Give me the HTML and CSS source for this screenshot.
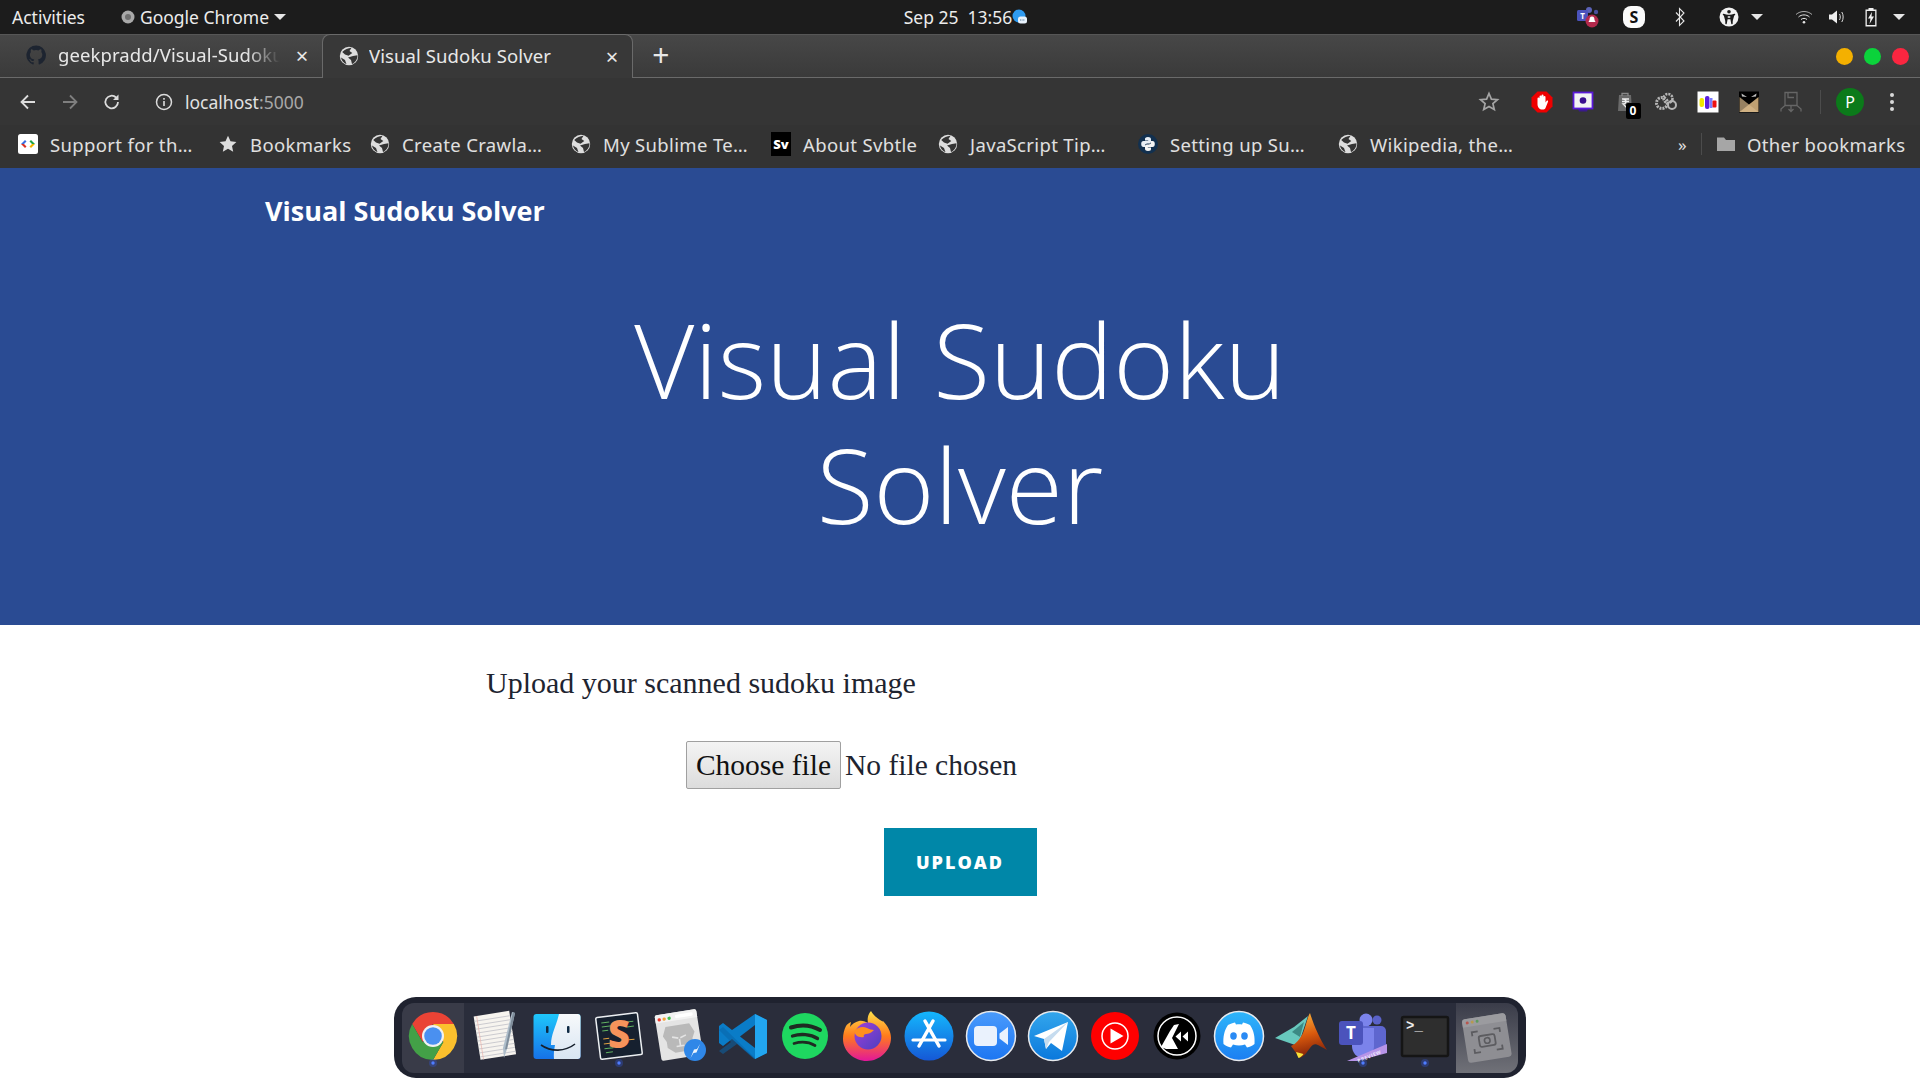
FILE: index.html
```html
<!DOCTYPE html>
<html lang="en">
<head>
<meta charset="utf-8">
<title>Visual Sudoku Solver</title>
<link rel="stylesheet" href="styles.css">
</head>
<body>
<svg class="defs" aria-hidden="true">
  <symbol id="globe" viewBox="0 0 20 20">
    <circle cx="10" cy="10" r="9.200" fill="#dedede"/>
    <path d="M3.200 6C6 3 9 2 12.500 1.700L10.500 5l2.800 2-3.800 2.800L6 8.500z M9 11.500l5-1.500 4.500-.8C18.500 13 16.500 16.500 13 18l-1-4z M2 11.500l4 2.500 1.500 4.300C4.500 17 2.500 14.500 2 11.500z" fill="#353535"/>
  </symbol>
</svg>

<header class="topbar">
  <div class="top-left">
    <span class="top-activities">Activities</span>
    <span class="top-app">
      <svg class="i14" viewBox="0 0 14 14"><circle cx="7" cy="7" r="6.500" fill="#a9a9a9"/><circle cx="7" cy="7" r="3" fill="#6f6f6f"/></svg>
      Google Chrome
      <i class="caret"></i>
    </span>
  </div>
  <div class="top-clock">
    <span>Sep 25&nbsp; 13:56</span>
    <svg class="clock-bubble" viewBox="0 0 16 16"><circle cx="7" cy="7" r="6.500" fill="#2f9bf0"/><rect x="6" y="7.500" width="9" height="7" rx="2.500" fill="#e8f2fb"/><path d="M8 11h5" stroke="#5b7d9b" stroke-width="1" stroke-dasharray="1 .6"/></svg>
  </div>
  <div class="top-right">
    <svg class="tray tray-teams" viewBox="0 0 24 22"><circle cx="13" cy="4" r="3" fill="#5b62b8"/><circle cx="20" cy="6" r="2.200" fill="#4a4f9c"/><rect x="1" y="4" width="11" height="11" rx="1.500" fill="#4b53bc"/><text x="6.500" y="13" class="tray-t">T</text><circle cx="16" cy="15" r="6.500" fill="#b3294c"/><path d="M16 10.500c-2 0-2.500 1.800-2.500 3.500l-1 2h7l-1-2c0-1.700-.5-3.500-2.500-3.500z" fill="#fff"/></svg>
    <span class="tray-skype">S</span>
    <svg class="tray tray-bt" viewBox="0 0 12 20"><path d="M2 5.500 10 14l-4.500 4.500V1.500L10 6 2 14.500" fill="none" stroke="#e6e6e6" stroke-width="1.100"/></svg>
    <svg class="tray tray-acc" viewBox="0 0 20 20"><circle cx="10" cy="10" r="9.500" fill="#f2f2f2"/><circle cx="10" cy="4.800" r="1.800" fill="#1c1c1c"/><path d="M4.500 7.500 8 8.500v3L7 16.500M15.500 7.500 12 8.500v3l1 5M8 8.500h4M8.500 11.500h3" fill="#1c1c1c" stroke="#1c1c1c" stroke-width="1.500" stroke-linecap="round"/></svg>
    <i class="caret caret-acc"></i>
    <svg class="tray tray-wifi" viewBox="0 0 18 16"><g fill="none" stroke="#e6e6e6" stroke-width="1"><path d="M1 5.500c4.500-4 11.500-4 16 0" opacity=".7"/><path d="M3.500 8c3-2.800 8-2.800 11 0"/><path d="M6 10.500c1.800-1.500 4.200-1.500 6 0"/></g><circle cx="9" cy="13.300" r="1.300" fill="#e6e6e6"/></svg>
    <svg class="tray tray-vol" viewBox="0 0 17 16"><path d="M1 5.500h3L9 1.500v13l-5-4H1z" fill="#eee"/><path d="M11.500 5c1 1.800 1 4.200 0 6M13.800 3c1.800 3 1.800 7 0 10" fill="none" stroke="#ddd" stroke-width="1"/></svg>
    <svg class="tray tray-bat" viewBox="0 0 14 20"><path d="M4.500 1h5v1.500h3v17h-11v-17h3z" fill="#f0f0f0"/><rect x="2.800" y="4" width="8.400" height="14" fill="#1c1c1c"/><path d="M8 5 4 11.500h2.500L5.500 17 10 9.500H7.500z" fill="#f0f0f0"/></svg>
    <i class="caret caret-end"></i>
  </div>
</header>

<div class="tabstrip">
  <div class="tab tab-idle">
    <svg class="fav" viewBox="0 0 20 20"><path d="M10 .5a9.700 9.700 0 0 0-3 18.900c.5.100.7-.2.700-.5v-1.700c-2.700.6-3.300-1.300-3.300-1.300-.4-1.100-1.100-1.400-1.100-1.400-.9-.6.100-.6.100-.6 1 .1 1.500 1 1.500 1 .9 1.500 2.300 1.100 2.800.8.100-.6.300-1.100.6-1.300-2.200-.2-4.400-1.100-4.400-4.800 0-1.100.4-1.900 1-2.600-.1-.2-.4-1.200.1-2.600 0 0 .8-.3 2.700 1a9.400 9.400 0 0 1 4.800 0c1.900-1.300 2.700-1 2.700-1 .5 1.400.2 2.400.1 2.600.6.700 1 1.500 1 2.600 0 3.700-2.200 4.500-4.400 4.800.4.300.7.900.7 1.800v2.700c0 .3.200.6.700.5A9.700 9.700 0 0 0 10 .5z" fill="#1d2430"/></svg>
    <span class="tab-title tab-fade">geekpradd/Visual-Sudoku</span>
    <span class="tab-x">×</span>
  </div>
  <div class="tab tab-active">
    <svg class="fav"><use href="#globe"/></svg>
    <span class="tab-title tab-title-on">Visual Sudoku Solver</span>
    <span class="tab-x">×</span>
  </div>
  <span class="tab-new">+</span>
  <div class="winbtns">
    <i class="winbtn win-min"></i><i class="winbtn win-max"></i><i class="winbtn win-close"></i>
  </div>
</div>

<div class="toolbar">
  <svg class="nav-ic" viewBox="0 0 20 20"><path d="M17 10H4M10 3.500 3.500 10l6.500 6.500" fill="none" stroke="#dcdcdc" stroke-width="1.800"/></svg>
  <svg class="nav-ic" viewBox="0 0 20 20"><path d="M3 10h13M10 3.500l6.500 6.500-6.500 6.500" fill="none" stroke="#7f7f7f" stroke-width="1.800"/></svg>
  <svg class="nav-ic" viewBox="0 0 20 20"><path d="M16 10a6.300 6.300 0 1 1-1.900-4.500" fill="none" stroke="#dcdcdc" stroke-width="1.800"/><path d="M16.500 2.500v5.500H11z" fill="#dcdcdc"/></svg>
  <div class="omni">
    <svg class="omni-info" viewBox="0 0 18 18"><circle cx="9" cy="9" r="7.500" fill="none" stroke="#dcdcdc" stroke-width="1.500"/><rect x="8.200" y="8" width="1.600" height="5" fill="#dcdcdc"/><rect x="8.200" y="5" width="1.600" height="1.700" fill="#dcdcdc"/></svg>
    <span class="omni-host">localhost</span><span class="omni-port">:5000</span>
  </div>
  <div class="ext-row">
    <svg class="ext ext-star" viewBox="0 0 24 24"><path d="m12 3.500 2.400 5.600 6.100.5-4.600 4 1.400 6-5.300-3.200-5.300 3.200 1.400-6-4.600-4 6.100-.5z" fill="none" stroke="#a5a5a5" stroke-width="1.700"/></svg>
    <svg class="ext" viewBox="0 0 24 24"><path d="M7.500 1.500h9l6 6v9l-6 6h-9l-6-6v-9z" fill="#ee0000"/><path d="M7.500 14V8.500a1 1 0 0 1 2 0V11V6.500a1 1 0 0 1 2 0V11V5.500a1 1 0 0 1 2 0V11V7a1 1 0 0 1 2 0v5.500l1-1.500c.6-.9 2-.3 1.500.8L15.500 18c-.5 1-1.500 1.500-3 1.500-3 0-5-2-5-5.500z" fill="#fff"/></svg>
    <svg class="ext" viewBox="0 0 24 24"><path d="M7 19h10l-1 2.500H8z" fill="#3a1a8c"/><rect x="2.500" y="2.500" width="19" height="16" fill="#f3f3f3" stroke="#5a19d8" stroke-width="1.800"/><circle cx="12" cy="10.500" r="3.300" fill="#3a0f8f"/></svg>
    <div class="ext ext-cart">
      <svg class="ext-fill" viewBox="0 0 24 24"><path d="M6 5h12l1 16H5z" fill="#6a6a6a"/><path d="M9 6V3.500h6V6" fill="none" stroke="#888" stroke-width="1.300"/><path d="M9 9h7M9 11.500h7M10 9c4 0 4 5 0 5l5 5" fill="none" stroke="#eee" stroke-width="1.300"/></svg>
      <span class="ext-badge">0</span>
    </div>
    <svg class="ext" viewBox="0 0 24 24"><g fill="none" stroke="#b5b5b5"><circle cx="8" cy="13" r="5.500" stroke-width="3" stroke-dasharray="2 1"/><circle cx="14" cy="8.500" r="4.500" stroke-width="2.500" stroke-dasharray="2 1"/><circle cx="18" cy="15" r="4" stroke-width="2"/></g></svg>
    <svg class="ext" viewBox="0 0 24 24"><rect x="1.500" y="1.500" width="21" height="21" fill="#fff"/><rect x="3.500" y="8" width="4.500" height="9" rx="2" fill="#efe600"/><rect x="9" y="6" width="4.500" height="13" rx="2" fill="#5a1fe0"/><rect x="14" y="8" width="2.500" height="10" fill="#7c7cff"/><rect x="16.500" y="10.500" width="4" height="7" rx="1" fill="#ee1111"/></svg>
    <svg class="ext" viewBox="0 0 24 24"><rect x="2" y="1.500" width="20" height="21" fill="#000"/><path d="M2.500 22 21.500 7v15z" fill="#bfa072"/><path d="M2.500 7 21.500 22H2.500z" fill="#d7b88a" opacity=".7"/><path d="M4.500 3.500 10 7 5 6.500zM19.500 3.500 14 7l5-.5z" fill="#bcbcbc"/></svg>
    <svg class="ext" viewBox="0 0 24 24"><g fill="none" stroke="#666" stroke-width="1.300"><path d="M6 2.500h12v13H6zM9 2.500v5h6M6 15.500 2 19v2.500M18 15.500 22 19v2.500M12 15.500v6M9.500 19l2.500 2.500 2.500-2.500"/></g></svg>
    <i class="ext-sep"></i>
    <span class="avatar">P</span>
    <span class="kebab"><i></i><i></i><i></i></span>
  </div>
</div>

<nav class="bookmarks">
  <div class="bm-grid">
    <a class="bm"><svg class="fav" viewBox="0 0 20 20"><rect width="20" height="20" rx="2.500" fill="#fff"/><path d="M3 10l4-4 1.500 1.500L6 10z" fill="#3a6fe0"/><path d="M3 10l4 4 1.500-1.500L6 10z" fill="#d93025"/><path d="M17 10l-4-4-1.500 1.500L14 10z" fill="#1ea446"/><path d="M17 10l-4 4-1.500-1.500L14 10z" fill="#f4b400"/></svg><span>Support for th…</span></a>
    <a class="bm"><svg class="fav" viewBox="0 0 20 20"><path d="m10 1.800 2.500 5.400 5.900.7-4.400 4 1.200 5.800L10 14.800l-5.200 2.900L6 11.900l-4.400-4 5.900-.7z" fill="#dedede"/></svg><span>Bookmarks</span></a>
    <a class="bm"><svg class="fav"><use href="#globe"/></svg><span>Create Crawla…</span></a>
    <a class="bm"><svg class="fav"><use href="#globe"/></svg><span>My Sublime Te…</span></a>
    <a class="bm"><span class="sv-logo">Sv</span><span>About Svbtle</span></a>
    <a class="bm"><svg class="fav"><use href="#globe"/></svg><span>JavaScript Tip…</span></a>
    <a class="bm"><svg class="fav" viewBox="0 0 20 20"><circle cx="10" cy="10" r="10" fill="#12304f"/><path d="M10 3c-2.500 0-3 1-3 2v1.500h3.200V7H5.500C4 7 3.200 8.300 3.200 10s.8 3 2.300 3H7v-1.500c0-1.300 1-2 2.200-2h2c1 0 1.800-.8 1.800-1.800V5c0-1.200-1.300-2-3-2z" fill="#e8eef5"/><path d="M10 17c2.500 0 3-1 3-2v-1.500H9.800V13h4.700c1.500 0 2.300-1.300 2.300-3s-.8-3-2.300-3H13v1.500c0 1.300-1 2-2.200 2h-2C7.800 10.500 7 11.300 7 12.300V15c0 1.200 1.300 2 3 2z" fill="#f5f5f5"/></svg><span>Setting up Su…</span></a>
    <a class="bm"><svg class="fav"><use href="#globe"/></svg><span>Wikipedia, the…</span></a>
  </div>
  <span class="bm-more">»</span>
  <i class="bm-sep"></i>
  <a class="bm bm-other"><svg class="fav" viewBox="0 0 20 20"><path d="M1 3.500h7l2 2.500h9v11H1z" fill="#a6a6a6"/></svg><span>Other bookmarks</span></a>
</nav>

<main class="page">
  <section class="hero">
    <div class="brand">Visual Sudoku Solver</div>
    <h1 class="hero-title">Visual Sudoku<br>Solver</h1>
  </section>
  <form class="upload">
    <p class="upload-label">Upload your scanned sudoku image</p>
    <div class="file-row">
      <button type="button" class="file-btn">Choose file</button>
      <span class="file-none">No file chosen</span>
    </div>
    <button type="button" class="upload-btn">UPLOAD</button>
  </form>
</main>

<aside class="dock">
  <div class="dock-inner">
  <div class="tile tile-on">
    <svg viewBox="0 0 62 70"><path d="M51.800 21A24 24 0 0 0 10.200 21L20.600 39 31 21z" fill="#ea4335"/><path d="M51.800 21A24 24 0 0 1 31 57L41.400 39 31 21z" fill="#fbc02d"/><path d="M31 57A24 24 0 0 1 10.200 21L20.600 39H41.400z" fill="#43a047"/><circle cx="31" cy="33" r="11" fill="#f1f1f1"/><circle cx="31" cy="33" r="8.800" fill="#4a90f0"/><circle cx="31" cy="60" r="4" fill="#3557d8" opacity=".35"/><circle cx="31" cy="60" r="1.700" fill="#4f7dff"/></svg>
  </div>
  <div class="tile">
    <svg viewBox="0 0 62 70"><g transform="rotate(-9 33 33)"><rect x="13" y="10" width="36" height="44" fill="#f7f4ef"/><path d="M13 15h36M13 19h36M13 23h36M13 27h36M13 31h36M13 35h36M13 39h36M13 43h36M13 47h36M13 51h36" stroke="#bcbcc4" stroke-width=".7"/><path d="M16 10v44" stroke="#e9b7b0" stroke-width=".7"/></g><path d="M48 9l3 1-8 36-3 9-1-10z" fill="#aebdca"/><path d="M49 9l2 1-8 36-2 .5z" fill="#7e8c9a"/></svg>
  </div>
  <div class="tile">
    <svg viewBox="0 0 62 70"><defs><linearGradient id="fa" x1="0" y1="0" x2="0" y2="1"><stop offset="0" stop-color="#1fc7fb"/><stop offset="1" stop-color="#1672e8"/></linearGradient><linearGradient id="fb" x1="0" y1="0" x2="0" y2="1"><stop offset="0" stop-color="#f7f9fb"/><stop offset="1" stop-color="#d8e5f2"/></linearGradient></defs><rect x="7.500" y="11" width="47" height="45" rx="3" fill="url(#fa)"/><path d="M33 11h18.500a3 3 0 0 1 3 3v39a3 3 0 0 1-3 3H28c-.5-5 .2-10 1-14h-4c0-11 5-18 8-31z" fill="url(#fb)"/><rect x="20" y="23" width="2.500" height="7" rx="1" fill="#0f2a44"/><rect x="41" y="23" width="2.500" height="7" rx="1" fill="#0f2a44"/><path d="M15 42c10 7 24 7 34-1" fill="none" stroke="#16202c" stroke-width="1.600"/></svg>
  </div>
  <div class="tile">
    <svg viewBox="0 0 62 70"><g transform="rotate(-7 31 33)"><rect x="10" y="12" width="42" height="42" rx="1.500" fill="#16202f" stroke="#eceff2" stroke-width="1.500"/><path d="M15 18h8M15 22h12M15 26h6M39 20h8M40 25h7M15 44h9M16 48h7" stroke="#60b060" stroke-width="1"/><path d="M15 34h6M15 39h8M40 38h6" stroke="#e0a040" stroke-width="1"/></g><text x="31" y="45" class="sublime-s">S</text><circle cx="31" cy="60" r="4" fill="#3557d8" opacity=".35"/><circle cx="31" cy="60" r="1.700" fill="#4f7dff"/></svg>
  </div>
  <div class="tile">
    <svg viewBox="0 0 62 70"><g transform="rotate(-9 29 33)"><rect x="8" y="9" width="42" height="46" rx="2" fill="#e4e4e4"/><path d="M8 11a2 2 0 0 1 2-2h38a2 2 0 0 1 2 2v6H8z" fill="#f2f2f2"/><circle cx="12" cy="14" r="1.700" fill="#ee3b2e"/><circle cx="17" cy="14" r="1.700" fill="#f2a33a"/><circle cx="22" cy="14" r="1.700" fill="#3fbf4f"/><rect x="28" y="11.500" width="18" height="3.500" rx="1.700" fill="#fff"/><path d="M17 22h24l4 9-3 6v6l-7 6h-12l-7-6v-6l-3-6z" fill="#b9b9b9"/><path d="M22 33l6 2M36 33l-6 2M25 43h8M29 36v7" stroke="#e4e4e4" stroke-width="1.600" fill="none"/></g><circle cx="45" cy="47" r="11" fill="#2f87e8"/><path d="M50 41l-3.500 8.500-3 .5-3 5 3.500-8.500 3-.5z" fill="#eef5fc"/></svg>
  </div>
  <div class="tile">
    <svg viewBox="0 0 62 70"><path d="M43 11l12 6v33l-12 6-23-20-9 7-4-3v-17l4-3 9 7z" fill="#0a7cc7"/><path d="M43 11l12 6v33l-12 6z" fill="#22a6f0"/><path d="M43 22 28 33.500 43 45z" fill="#2a2d3b"/><path d="M7 27l4-3 32 31-1 1-17-15-14 10-4-3 12-9z" fill="#0a64a8" opacity=".55"/></svg>
  </div>
  <div class="tile">
    <svg viewBox="0 0 62 70"><circle cx="31" cy="33" r="23" fill="#1ed760"/><g fill="none" stroke="#1f2a22" stroke-linecap="round"><path d="M17 24.500c9-3 20-2.500 29 2.500" stroke-width="4"/><path d="M18.500 33c8-2.500 18-2 25 2.500" stroke-width="3.300"/><path d="M20 40.500c7-2 15-1.500 21 2" stroke-width="2.700"/></g></svg>
  </div>
  <div class="tile">
    <svg viewBox="0 0 62 70"><defs><linearGradient id="ffa" x1="0" y1="0" x2="0" y2="1"><stop offset="0" stop-color="#ffe14a"/><stop offset=".5" stop-color="#ff7b1c"/><stop offset="1" stop-color="#e3169a"/></linearGradient><linearGradient id="ffb" x1="0" y1="0" x2="1" y2="1"><stop offset="0" stop-color="#a03fd8"/><stop offset="1" stop-color="#4d3fc0"/></linearGradient></defs><path d="M35 8c2 4 5 6 9 9 2 1 3 2 3 1 5 5 8 11 8 17 0 12-11 23-24 23S7 48 7 36c0-5 1-9 3-13 1-2 3-3 5-4l-1 5c2-3 5-5 9-6 3-1 7 1 9 2-1-4 0-9 3-12z" fill="url(#ffa)"/><circle cx="32" cy="33" r="13.500" fill="url(#ffb)"/><path d="M18 28c4-4 9-5 13-3 2 1 5 2 7 2-3 3-6 4-8 4s-3 2-2 3c-6 1-9-2-10-6z" fill="#ff8f1f"/></svg>
  </div>
  <div class="tile">
    <svg viewBox="0 0 62 70"><defs><linearGradient id="asa" x1="0" y1="0" x2="0" y2="1"><stop offset="0" stop-color="#14b7fd"/><stop offset="1" stop-color="#1558d6"/></linearGradient></defs><circle cx="31" cy="33" r="24.500" fill="url(#asa)"/><g fill="none" stroke="#fff" stroke-linecap="round"><path d="M35 18 21 43" stroke-width="3.500"/><path d="M27 18l14 25" stroke-width="3.500"/><path d="M15 37h32" stroke-width="3.200"/></g></svg>
  </div>
  <div class="tile">
    <svg viewBox="0 0 62 70"><defs><linearGradient id="za" x1="0" y1="0" x2="0" y2="1"><stop offset="0" stop-color="#4a9bfc"/><stop offset="1" stop-color="#1c76f2"/></linearGradient></defs><circle cx="31" cy="33" r="24.500" fill="url(#za)" stroke="#e8eaed" stroke-width="1.500"/><rect x="14" y="23" width="23" height="20" rx="4" fill="#eaf2fd"/><path d="M39.500 30.500 48 24v18l-8.500-6.500z" fill="#eaf2fd"/></svg>
  </div>
  <div class="tile">
    <svg viewBox="0 0 62 70"><defs><linearGradient id="ta" x1="0" y1="0" x2="0" y2="1"><stop offset="0" stop-color="#33a6ec"/><stop offset="1" stop-color="#0a78dc"/></linearGradient></defs><circle cx="31" cy="33" r="24.500" fill="url(#ta)" stroke="#e8eaed" stroke-width="1.500"/><path d="M12 33 46 19l-6 29-11-8-5 6-2-10z" fill="#fff"/><path d="M22 36 46 19 27 39l-3 7z" fill="#c6dcef"/></svg>
  </div>
  <div class="tile">
    <svg viewBox="0 0 62 70"><circle cx="31" cy="33" r="24" fill="#f00"/><circle cx="31" cy="33" r="13" fill="none" stroke="#fff" stroke-width="1.500"/><path d="M26.500 25.500 39.500 33l-13 7.500z" fill="#fff"/></svg>
  </div>
  <div class="tile">
    <svg viewBox="0 0 62 70"><circle cx="31" cy="33" r="23.500" fill="#000"/><circle cx="31" cy="33" r="19" fill="none" stroke="#fff" stroke-width="1.500"/><path d="M15 44 24 28l4-6 5-1-7 14 6 11H20z" fill="#fff"/><path d="M35 28.500l-5.500 5 5.500 5zM42 28.500l-5.500 5 5.500 5z" fill="#fff"/></svg>
  </div>
  <div class="tile">
    <svg viewBox="0 0 62 70"><defs><linearGradient id="da" x1="0" y1="0" x2="0" y2="1"><stop offset="0" stop-color="#2eb6fa"/><stop offset="1" stop-color="#1c7ef2"/></linearGradient></defs><circle cx="31" cy="33" r="24.500" fill="url(#da)" stroke="#e8eaed" stroke-width="1.500"/><path d="M20 22c3-1.500 6-2.500 7-2.500l1 2c2-.3 4-.3 6 0l1-2c1 0 4 1 7 2.500 4 6 5 12 4.500 19-2 2-5 3-7.500 3.500l-2-3c-4 1.200-8 1.200-12 0l-2 3C20.500 44 17.500 43 15.500 41c-.5-7 .5-13 4.500-19z" fill="#fff"/><ellipse cx="25.500" cy="33" rx="3.300" ry="3.700" fill="#2a8af4"/><ellipse cx="36.500" cy="33" rx="3.300" ry="3.700" fill="#2a8af4"/></svg>
  </div>
  <div class="tile">
    <svg viewBox="0 0 62 70"><defs><linearGradient id="ma" x1=".3" y1="0" x2=".5" y2="1"><stop offset="0" stop-color="#fbb13a"/><stop offset=".5" stop-color="#d9590d"/><stop offset="1" stop-color="#7a1c08"/></linearGradient></defs><path d="M5 35 24 24 38 13 28 43z" fill="#68c8bd"/><path d="M22 29 34 19 30 34z" fill="#3c8a84"/><path d="M40 10c3 10 9 25 17 37l-9-5c-3-2-6 0-8 3-3 4-6 9-11 10-2-4-5-8-8-12 5-2 9-7 12-13 3-7 4-15 7-20z" fill="url(#ma)"/><path d="M26 49c1 3 2 5 2.500 6 2-.5 3.500-2 5-4z" fill="#f8e43a"/></svg>
  </div>
  <div class="tile">
    <svg viewBox="0 0 62 70"><circle cx="34" cy="17" r="6.500" fill="#7b83eb"/><circle cx="45" cy="17" r="4.500" fill="#5a62c9"/><rect x="26" y="23" width="28" height="24" rx="5" fill="#5e66cf"/><path d="M20 25h22v18c0 7-5 12-11 12s-11-5-11-12z" fill="#7b83eb"/><rect x="7" y="18" width="24" height="24" rx="3" fill="#4b53bc"/><text x="19" y="36" class="teams-t">T</text><path d="M15 58 55 41v9l-30 8z" fill="#b794e8"/><text x="38" y="55" class="teams-prev" transform="rotate(-22 38 55)">PREVIEW</text><circle cx="31" cy="60" r="4" fill="#3557d8" opacity=".35"/><circle cx="31" cy="60" r="1.700" fill="#4f7dff"/></svg>
  </div>
  <div class="tile">
    <svg viewBox="0 0 62 70"><rect x="8" y="14" width="46" height="39" rx="1.500" fill="#2e2e2e" stroke="#151515" stroke-width="2.500"/><text x="12" y="27" class="term-t">&gt;_</text><circle cx="31" cy="60" r="4" fill="#3557d8" opacity=".35"/><circle cx="31" cy="60" r="1.700" fill="#4f7dff"/></svg>
  </div>
  <div class="tile tile-shot">
    <svg viewBox="0 0 62 70"><g transform="rotate(-9 31 36)"><rect x="9" y="13" width="44" height="44" rx="3" fill="#8e8e93"/><path d="M9 16a3 3 0 0 1 3-3h38a3 3 0 0 1 3 3v5H9z" fill="#9b9b9f"/><circle cx="14" cy="17" r="1.500" fill="#b8564e"/><circle cx="19" cy="17" r="1.500" fill="#b89a4e"/><circle cx="24" cy="17" r="1.500" fill="#5e9a5e"/><path d="M17 31v-4h6M45 31v-4h-6M17 44v4h6M45 44v4h-6" fill="none" stroke="#5c5c60" stroke-width="1.800"/><rect x="23" y="32" width="16" height="11" rx="2" fill="none" stroke="#5c5c60" stroke-width="1.800"/><circle cx="31" cy="37.500" r="2.800" fill="none" stroke="#5c5c60" stroke-width="1.600"/></g></svg>
  </div>
  </div>
</aside>
</body>
</html>
```

FILE: styles.css
```css
* { box-sizing: border-box; }
html, body { margin: 0; padding: 0; height: 1080px; overflow: hidden; background: #fff; }
body { font-family: "Noto Sans", "Lato", sans-serif; position: relative; }
.defs { position: absolute; width: 0; height: 0; }
svg { display: block; flex: none; }

.topbar {
  height: 34px; background: #1c1c1c; color: #ececec; font-size: 17.500px;
  display: grid; grid-template-columns: 1fr auto 1fr; align-items: center; padding: 0 0 0 12px;
}
.top-left { display: flex; align-items: center; }
.top-activities { margin-right: 36px; }
.top-app { display: flex; align-items: center; gap: 5px; }
.i14 { width: 14px; height: 14px; }
.caret { display: block; width: 0; height: 0; border-left: 6px solid transparent; border-right: 6px solid transparent; border-top: 6px solid #e6e6e6; }
.top-clock { display: flex; align-items: center; font-size: 17.500px; }
.clock-bubble { width: 16px; height: 16px; }
.top-right { display: flex; align-items: center; justify-content: flex-end; height: 34px; }
.tray-teams { width: 24px; height: 22px; margin-right: 23px; }
.tray-t { font: 700 8px "Open Sans", sans-serif; fill: #fff; text-anchor: middle; }
.tray-skype { width: 22px; height: 22px; background: #fbfbfb; border-radius: 8px; color: #111; font: 700 16px/22px "Open Sans", sans-serif; text-align: center; margin-right: 29px; }
.tray-bt { width: 12px; height: 20px; margin-right: 33px; }
.tray-acc { width: 20px; height: 20px; margin-right: 12px; }
.caret-acc { margin-right: 32px; }
.tray-wifi { width: 18px; height: 16px; margin-right: 15px; }
.tray-vol { width: 17px; height: 16px; margin-right: 19px; }
.tray-bat { width: 14px; height: 20px; margin-right: 15px; }
.caret-end { margin-right: 15px; }

.tabstrip {
  height: 44px; background: linear-gradient(#474747, #3a3a3a); border-top: 1px solid #565656; border-bottom: 1px solid #6a6a6a;
  display: flex; align-items: flex-end; color: #e8e8e8; font-size: 18.500px; letter-spacing: .1px;
}
.tab { display: flex; align-items: center; height: 43px; padding-left: 26px; padding-bottom: 2px; }
.tab-idle { width: 322px; }
.tab-active { width: 311px; padding-left: 16px; background: #383838; border: 1px solid #6a6a6a; border-bottom: 0; border-radius: 8px 8px 0 0; height: 44px; margin-bottom: -1px; }
.fav { width: 20px; height: 20px; }
.tab-title { flex: 1; margin-left: 12px; white-space: nowrap; overflow: hidden; }
.tab-title-on { margin-left: 10px; }
.tab-fade { -webkit-mask-image: linear-gradient(90deg, #000 85%, transparent); mask-image: linear-gradient(90deg, #000 85%, transparent); margin-right: 14px; }
.tab-x { width: 16px; font-size: 22px; line-height: 1; text-align: center; margin-right: 12px; }
.tab-new { width: 30px; margin-left: 13px; font-size: 30px; line-height: 40px; height: 42px; text-align: center; font-weight: 400; }
.winbtns { margin-left: auto; display: flex; gap: 11px; align-self: center; padding-right: 11px; }
.winbtn { display: block; width: 17px; height: 17px; border-radius: 50%; }
.win-min { background: #f4b000; }
.win-max { background: #0bd33b; }
.win-close { background: #fb2640; }

.toolbar { height: 47px; background: #353535; display: flex; align-items: center; padding-left: 18px; color: #dcdcdc; }
.nav-ic { width: 20px; height: 20px; margin-right: 22px; }
.omni { display: flex; align-items: center; margin-left: 11px; font-size: 17.500px; }
.omni-info { width: 18px; height: 18px; margin-right: 12px; }
.omni-host { color: #e2e2e2; }
.omni-port { color: #a8a8a8; }
.ext-row { margin-left: auto; display: flex; align-items: center; padding-right: 26px; }
.ext { width: 24px; height: 24px; margin-right: 17.500px; position: relative; flex: none; }
.ext-star { margin-right: 29px; }
.ext-fill { width: 24px; height: 24px; }
.ext-badge { position: absolute; right: -4px; bottom: -5px; width: 15px; height: 16px; background: #000; color: #fff; font: 700 12px/16px "Open Sans", sans-serif; text-align: center; border-radius: 2px; }
.ext-sep { display: block; width: 1px; height: 24px; background: #4c4c4c; margin: 0 15px 0 0; }
.avatar { width: 28px; height: 28px; border-radius: 50%; background: #0b7a1a; color: #fff; font-size: 16px; line-height: 28px; text-align: center; margin-right: 26px; }
.kebab { display: flex; flex-direction: column; gap: 3px; width: 4px; }
.kebab i { display: block; width: 4px; height: 4px; border-radius: 50%; background: #d8d8d8; }

.bookmarks { height: 43px; background: #333; display: flex; align-items: center; color: #e0e0e0; font-size: 18.500px; letter-spacing: .35px; padding: 0 0 5px 18px; }
.bm-grid { display: grid; grid-template-columns: 200px 152px 201px 200px 167px 200px 200px 200px; }
.bm { display: flex; align-items: center; gap: 12px; white-space: nowrap; }
.sv-logo { width: 20px; height: 24px; background: #000; color: #fff; font: 800 13px/24px "Open Sans", sans-serif; text-align: center; letter-spacing: 0; }
.bm-more { margin-left: 140px; width: 12px; font-size: 17px; }
.bm-sep { display: block; width: 1px; height: 22px; background: #4c4c4c; margin: 0 14px 0 11px; }
.bm-other { gap: 11px; }

.hero { height: 457px; background: #2a4b93; color: #fff; display: flex; flex-direction: column; }
.brand { font: 700 27px/36px "Open Sans", sans-serif; padding: 25px 0 0 265px; height: 61px; }
.hero-title { margin: 0; font: 300 104px/125px "Open Sans", sans-serif; text-align: center; padding-top: 67px; }

.upload { display: flex; flex-direction: column; font-family: "Liberation Serif", serif; color: #1e2430; }
.upload-label { margin: 38px 0 0 486px; font-size: 30px; line-height: 40px; }
.file-row { display: flex; align-items: center; margin: 38px 0 0 686px; font-size: 29.500px; }
.file-btn { width: 155px; height: 48px; padding: 0; font: inherit; color: #111; background: linear-gradient(#f4f4f4, #dcdcdc); border: 1px solid #a0a0a0; border-radius: 2px; }
.file-none { margin-left: 4px; }
.upload-btn { align-self: center; margin-top: 39px; width: 153px; height: 68px; background: #0087a8; color: #fff; border: 0; font: 800 18px "Open Sans", sans-serif; letter-spacing: 2px; padding: 0; }

.dock { position: absolute; left: 394px; top: 997px; width: 1132px; height: 81px; padding: 6px 8px 5px; background: #1f222f; border-radius: 22px; }
.dock-inner { display: flex; height: 70px; background: #2a2d3b; border-radius: 12px; overflow: hidden; }
.tile { width: 62px; height: 70px; flex: none; }
.tile svg { width: 62px; height: 70px; }
.tile-on { background: rgba(255,255,255,.07); }
.tile-shot { background: linear-gradient(#3a3c49, #707178); }
.sublime-s { font: 800 38px "Open Sans", sans-serif; fill: #f7935b; text-anchor: middle; }
.teams-t { font: 700 17px "Open Sans", sans-serif; fill: #fff; text-anchor: middle; }
.teams-prev { font: 700 5px "Open Sans", sans-serif; fill: #efe6fb; text-anchor: middle; letter-spacing: .5px; }
.term-t { font: 700 14px "Liberation Mono", monospace; fill: #f0f0f0; }
```
